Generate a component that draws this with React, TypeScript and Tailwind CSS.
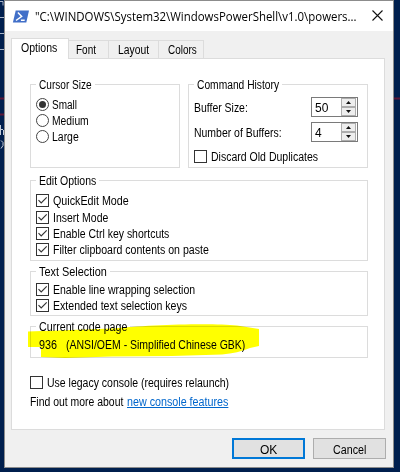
import { useLayoutEffect, useRef, useState, type ReactNode } from "react";

/* A single line of dialog text, condensed to the given advance width. */
function T({ w, children, className = "" }: { w: number; children: ReactNode; className?: string }) {
  const ref = useRef<HTMLSpanElement>(null);
  const [scale, setScale] = useState(1);
  useLayoutEffect(() => {
    if (ref.current) setScale(w / ref.current.offsetWidth);
  }, [w]);
  return (
    <span className="block h-4 shrink-0 whitespace-pre" style={{ width: w }}>
      <span ref={ref} className={`inline-block origin-left leading-4 ${className}`} style={{ transform: `scaleX(${scale})` }}>
        {children}
      </span>
    </span>
  );
}

function Box({ on = false }: { on?: boolean }) {
  return (
    <span className="flex size-[13px] shrink-0 items-center justify-center border border-[#333] bg-white">
      {on && (
        <svg viewBox="0 0 11 11" className="size-[11px]" fill="none" stroke="#333" strokeWidth="1.15">
          <path d="M1.5 5.2 4.2 7.9 9.7 2.4" />
        </svg>
      )}
    </span>
  );
}

function Check({ w, on = false, label, className = "" }: { w: number; on?: boolean; label: string; className?: string }) {
  return (
    <div className={`flex h-4 items-center gap-[4px] ${className}`}>
      <Box on={on} />
      <T w={w}>{label}</T>
    </div>
  );
}

function Radio({ w, on = false, label }: { w: number; on?: boolean; label: string }) {
  return (
    <div className="flex h-4 items-center gap-[3px]">
      <span className="flex size-[13px] shrink-0 items-center justify-center rounded-full border border-[#444]">
        {on && <span className="size-[7px] rounded-full bg-[#333]" />}
      </span>
      <T w={w}>{label}</T>
    </div>
  );
}

function Group({ title, w, className, children }: { title: string; w: number; className: string; children: ReactNode }) {
  return (
    <section className={`relative border border-[#dcdcdc] ${className}`}>
      <div className="absolute -top-[9px] left-[5px] bg-white px-[3px]">
        <T w={w}>{title}</T>
      </div>
      {children}
    </section>
  );
}

function Spinner({ value, w }: { value: string; w: number }) {
  return (
    <div className="flex h-5 w-[47px] items-center justify-between border border-[#7a7a7a] bg-white pl-[3px]">
      <div className="-mt-px">
        <T w={w}>{value}</T>
      </div>
      <div className="flex h-[18px] w-4 flex-col">
        {["M5 6 7.5 3 10 6Z", "M5 3 7.5 6 10 3Z"].map((d) => (
          <span key={d} className="flex h-[9px] w-[15px] border border-[#adadad] bg-[#eee]">
            <svg viewBox="1 1 13 7" className="h-[7px] w-[13px]" fill="#111">
              <path d={d} />
            </svg>
          </span>
        ))}
      </div>
    </div>
  );
}

export default function App() {
  return (
    <div className="relative h-[472px] w-[400px] overflow-hidden bg-[#001f4e] font-['Liberation_Sans',Arial,sans-serif] text-[12px] text-black">
      {/* console window showing behind the dialog */}
      <svg className="absolute top-0 left-0 h-[472px] w-[400px]" viewBox="0 0 400 472" fill="none">
        <path d="M0 17.5h4M0 33.5h4M0 49.5h4M0 1.5h3v4" stroke="#a9b5c8" />
        <path d="M0 98.5h4M0 114.5h4M394 98.5h6" stroke="#5c1737" strokeWidth="2" />
        <path d="M.5 125v10M1 129.5h2M3.5 130v5M1 140.5l2 2v3l-2 3" stroke="#c4cddb" />
      </svg>
      <div className="relative ml-[4px] flex h-[468px] w-[390px] flex-col border border-[#8c8c8c] bg-[#f0f0f0]">
        <header className="flex h-[30px] shrink-0 items-center bg-white">
          <svg viewBox="0 0 17 13" className="mr-[5px] ml-[7px] h-[13px] w-[18px] shrink-0">
            <path d="M3.2.5h13.3L13.8 12.5H.4Z" fill="#416fc8" />
            <path d="M5.4 2.4 9.2 6.4 3.5 10.5M8.4 10.2h3.8" fill="none" stroke="#fff" strokeWidth="1.4" />
          </svg>
          <T w={322} className="font-['Open_Sans','Noto_Sans',sans-serif] text-[12px] text-black">
            {'"C:\\WINDOWS\\System32\\WindowsPowerShell\\v1.0\\powers...'}
          </T>
          <svg viewBox="0 0 11 11" className="mb-[2px] ml-[15px] size-[11px] shrink-0" stroke="#111" strokeWidth="1.1">
            <path d="M.5.5l10 10M10.5.5l-10 10" />
          </svg>
        </header>

        <nav className="flex h-[27px] shrink-0 items-end pl-[6px]">
          <div className="relative z-10 -mb-px flex h-[21px] w-[58px] border border-b-0 border-[#dcdcdc] bg-white pl-[9px]">
            <T w={36}>Options</T>
          </div>
          <div className="flex h-[18px] w-[40px] border-t border-r border-[#dcdcdc] pl-[7px]">
            <T w={20}>Font</T>
          </div>
          <div className="flex h-[18px] w-[50px] border-t border-r border-[#dcdcdc] pl-[9px]">
            <T w={31}>Layout</T>
          </div>
          <div className="flex h-[18px] w-[45px] border-t border-r border-[#dcdcdc] pl-[9px]">
            <T w={29}>Colors</T>
          </div>
        </nav>

        <main className="ml-[6px] h-[372px] w-[374px] shrink-0 border border-[#dcdcdc] bg-white pt-[25px] pl-[18px]">
          <div className="flex gap-[8px]">
            <Group title="Cursor Size" w={53} className="h-[84px] w-[150px] pt-[11px] pl-[5px]">
              <Radio on w={25} label="Small" />
              <Radio w={37} label="Medium" />
              <Radio w={27} label="Large" />
            </Group>
            <Group title="Command History" w={82} className="h-[84px] w-[180px] pt-[12px] pl-[5px]">
              <div className="flex h-[20px] items-center justify-between pr-[9px]">
                <T w={54}>Buffer Size:</T>
                <Spinner value="50" w={13} />
              </div>
              <div className="mt-[5px] flex h-[20px] items-center justify-between pr-[9px]">
                <T w={88}>Number of Buffers:</T>
                <Spinner value="4" w={7} />
              </div>
              <Check w={107} label="Discard Old Duplicates" className="mt-[6px]" />
            </Group>
          </div>

          <Group title="Edit Options" w={57} className="mt-[12px] h-[81px] w-[338px] pt-[11px] pl-[5px]">
            <Check on w={76} label="QuickEdit Mode" />
            <Check on w={55} label="Insert Mode" className="mt-px" />
            <Check on w={116} label="Enable Ctrl key shortcuts" />
            <Check on w={156} label="Filter clipboard contents on paste" />
          </Group>

          <Group title="Text Selection" w={68} className="mt-[10px] h-[45px] w-[338px] pt-[9px] pl-[5px]">
            <Check on w={142} label="Enable line wrapping selection" />
            <Check on w={134} label="Extended text selection keys" />
          </Group>

          <Group title="Current code page" w={88} className="mt-[10px] h-[32px] w-[338px] pt-[9px] pl-[8px]">
            <div className="flex gap-[9px]">
              <T w={18}>936</T>
              <T w={179}>(ANSI/OEM - Simplified Chinese GBK)</T>
            </div>
            <svg viewBox="28 322 234 38" className="absolute -top-[5px] -left-[3px] h-[38px] w-[234px] mix-blend-multiply" fill="#ffff00">
              <path d="M28 331.5Q70 330 112 328.5C145 325 210 322.5 237 325.5L259 329V346L250 348Q238 353 222 354.5L172 356 112 356.5 65 358 41 357V347H28Z" />
            </svg>
          </Group>

          <Check w={182} label="Use legacy console (requires relaunch)" className="mt-[16px]" />
          <div className="mt-[3px] flex gap-[4px]">
            <T w={93}>Find out more about</T>
            <T w={101} className="text-[#0066cc] underline underline-offset-1">new console features</T>
          </div>
        </main>

        <footer className="flex gap-[8px] pt-[8px] pl-[227px]">
          <button className="flex h-[21px] w-[73px] items-center justify-center border-2 border-[#0078d7] bg-[#e1e1e1]">
            <T w={17}>OK</T>
          </button>
          <button className="flex h-[21px] w-[73px] items-center justify-center border border-[#adadad] bg-[#e1e1e1]">
            <T w={33}>Cancel</T>
          </button>
        </footer>
      </div>
    </div>
  );
}
